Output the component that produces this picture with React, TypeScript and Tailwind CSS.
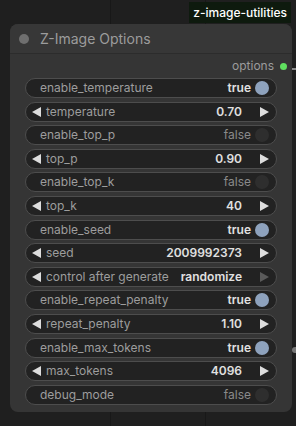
import React from 'react';

type Widget =
  | { kind: 'toggle'; name: string; on: boolean }
  | { kind: 'number'; name: string; value: string }
  | { kind: 'combo'; name: string; value: string };

const widgets: Widget[] = [
  { kind: 'toggle', name: 'enable_temperature', on: true },
  { kind: 'number', name: 'temperature', value: '0.70' },
  { kind: 'toggle', name: 'enable_top_p', on: false },
  { kind: 'number', name: 'top_p', value: '0.90' },
  { kind: 'toggle', name: 'enable_top_k', on: false },
  { kind: 'number', name: 'top_k', value: '40' },
  { kind: 'toggle', name: 'enable_seed', on: true },
  { kind: 'number', name: 'seed', value: '2009992373' },
  { kind: 'combo', name: 'control after generate', value: 'randomize' },
  { kind: 'toggle', name: 'enable_repeat_penalty', on: true },
  { kind: 'number', name: 'repeat_penalty', value: '1.10' },
  { kind: 'toggle', name: 'enable_max_tokens', on: true },
  { kind: 'number', name: 'max_tokens', value: '4096' },
  { kind: 'toggle', name: 'debug_mode', on: false },
];

const Arrow = ({ dir, dim }: { dir: 'left' | 'right'; dim?: boolean }) => (
  <svg width="9" height="10" viewBox="0 0 9 10" className="shrink-0">
    <polygon
      points={dir === 'left' ? '9,0 9,10 0,5' : '0,0 0,10 9,5'}
      fill={dim ? '#5a5a5a' : '#dddddd'}
    />
  </svg>
);

const Row = ({ w }: { w: Widget }) => {
  if (w.kind === 'toggle') {
    return (
      <div className="h-[20px] flex items-center rounded-full border border-[#4d4d4d] bg-[#222222] pl-[14px] pr-[7px]">
        <span className="flex-1 text-[#9d9d9d]">{w.name}</span>
        <span className={w.on ? 'text-[#e0e0e0] font-semibold' : 'text-[#8a8a8a]'}>
          {w.on ? 'true' : 'false'}
        </span>
        <span
          className={`ml-[4px] w-[14px] h-[14px] rounded-full ${w.on ? 'bg-[#8ea2bd]' : 'bg-[#2e2e2e]'}`}
        />
      </div>
    );
  }
  return (
    <div className="h-[20px] flex items-center rounded-full border border-[#4d4d4d] bg-[#222222] pl-[6px] pr-[7px]">
      <Arrow dir="left" />
      <span className="flex-1 ml-[5px] text-[#9d9d9d]">{w.name}</span>
      <span className="text-[#e0e0e0] font-semibold">{w.value}</span>
      <span className="ml-[18px]">
        <Arrow dir="right" dim={w.kind === 'combo'} />
      </span>
    </div>
  );
};

const App: React.FC = () => {
  return (
    <div className="relative w-[296px] h-[426px] overflow-hidden bg-[#1f1f1f] font-['Inter',sans-serif] text-[12px]">
      {/* canvas grid */}
      <div className="absolute left-[110px] top-0 bottom-0 w-px bg-[#181818]" />
      <div className="absolute left-[205px] top-0 bottom-0 w-px bg-[#181818]" />

      <div className="relative flex flex-col pt-[2px]">
        <div className="flex justify-end pr-[5px]">
          <div className="h-[21px] px-[4px] flex items-center bg-[#0e1a0e] text-white text-[12px] font-medium">
            z-image-utilities
          </div>
        </div>

        <div className="ml-[10px] mt-[1px] w-[282px] rounded-lg bg-[#353535] pb-[7px]">
          {/* title */}
          <div className="h-[30px] flex items-center pl-[9px] border-b border-[#2c2c2c] rounded-t-lg bg-[#373737]">
            <span className="w-[10px] h-[10px] rounded-full bg-[#6f6f6f]" />
            <span className="ml-[11px] text-[14px] text-[#9c9c9c]">Z-Image Options</span>
          </div>

          {/* output slot */}
          <div className="h-[24px] flex items-center justify-end pr-[5px]">
            <span className="text-[#9c9c9c]">options</span>
            <span className="ml-[6px] w-[7px] h-[7px] rounded-full bg-[#5fe05f]" />
          </div>

          {/* widgets */}
          <div className="flex flex-col gap-[3.6px] px-[15px]">
            {widgets.map((w) => (
              <Row key={w.name} w={w} />
            ))}
          </div>
        </div>
      </div>

      {/* link stubs */}
      <div className="absolute left-[292px] top-[68px] w-[4px] h-[2px] bg-[#8a8a8a]" />
      <div className="absolute left-[292px] top-[347px] w-[6px] h-[6px] rounded-full bg-[#777777]" />
    </div>
  );
};

export default App;
